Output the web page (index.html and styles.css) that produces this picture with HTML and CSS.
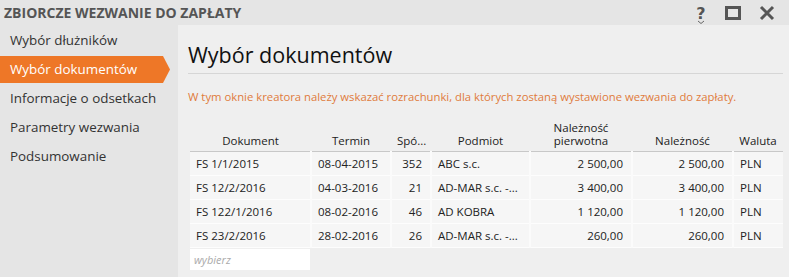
FILE: index.html
```html
<!DOCTYPE html>
<html lang="pl">
<head>
<meta charset="utf-8">
<link rel="stylesheet" href="styles.css">
</head>
<body>
<div class="window">
  <div class="titlebar">
    <div class="title">ZBIORCZE WEZWANIE DO ZAPŁATY</div>
    <div class="controls">
      <span class="ctl help">
        <svg width="14" height="20" viewBox="0 0 14 20"><text x="7" y="15" text-anchor="middle" class="qmark">?</text><path d="M4 17 L7 19.5 L10 17" fill="none" stroke="#666" stroke-width="1"/></svg>
      </span>
      <span class="ctl">
        <svg width="16" height="16" viewBox="0 0 16 16"><rect x="1.5" y="2.5" width="13" height="11" fill="none" stroke="#555" stroke-width="3"/></svg>
      </span>
      <span class="ctl">
        <svg width="16" height="16" viewBox="0 0 16 16"><path d="M2 2 L14 14 M14 2 L2 14" stroke="#555" stroke-width="3"/></svg>
      </span>
    </div>
  </div>
  <div class="body">
    <nav class="sidebar">
      <div class="step">Wybór dłużników</div>
      <div class="step active">Wybór dokumentów</div>
      <div class="step">Informacje o odsetkach</div>
      <div class="step">Parametry wezwania</div>
      <div class="step">Podsumowanie</div>
    </nav>
    <main class="main">
      <h1 class="heading">Wybór dokumentów</h1>
      <p class="hint">W tym oknie kreatora należy wskazać rozrachunki, dla których zostaną wystawione wezwania do zapłaty.</p>
      <table class="grid">
        <colgroup>
          <col class="c-doc"><col class="c-term"><col class="c-sp"><col class="c-pod"><col class="c-np"><col class="c-n"><col class="c-wal">
        </colgroup>
        <thead>
          <tr>
            <th>Dokument</th><th>Termin</th><th class="th-sp">Spó...</th><th>Podmiot</th><th class="th-np"><span class="l1">Należność</span><span class="l2">pierwotna</span></th><th>Należność</th><th>Waluta</th>
          </tr>
        </thead>
        <tbody>
          <tr><td>FS 1/1/2015</td><td>08-04-2015</td><td class="r">352</td><td>ABC s.c.</td><td class="r">2 500,00</td><td class="r">2 500,00</td><td>PLN</td></tr>
          <tr><td>FS 12/2/2016</td><td>04-03-2016</td><td class="r">21</td><td>AD-MAR s.c. -...</td><td class="r">3 400,00</td><td class="r">3 400,00</td><td>PLN</td></tr>
          <tr><td>FS 122/1/2016</td><td>08-02-2016</td><td class="r">46</td><td>AD KOBRA</td><td class="r">1 120,00</td><td class="r">1 120,00</td><td>PLN</td></tr>
          <tr><td>FS 23/2/2016</td><td>28-02-2016</td><td class="r">26</td><td>AD-MAR s.c. -...</td><td class="r">260,00</td><td class="r">260,00</td><td>PLN</td></tr>
        </tbody>
      </table>
      <div class="picker">wybierz</div>
    </main>
  </div>
</div>
</body>
</html>
```
FILE: styles.css
```css
* { box-sizing: border-box; }
html, body { margin: 0; padding: 0; }
body {
  width: 789px;
  height: 277px;
  overflow: hidden;
  background: #e5e5e5;
  font-family: "Open Sans", "Noto Sans", sans-serif;
  color: #222;
}
.window { display: flex; flex-direction: column; height: 277px; }
.titlebar {
  height: 25px;
  display: flex;
  align-items: center;
  justify-content: space-between;
  padding-left: 4px;
}
.title {
  font-size: 14px;
  font-weight: 700;
  color: #555;
}
.controls { display: flex; align-items: center; padding-right: 5px; }
.ctl { display: flex; width: 34px; justify-content: center; align-items: center; }
.ctl.help { width: 30px; padding-top: 3px; }
.qmark { font-family: "DejaVu Sans", sans-serif; font-weight: 700; font-size: 16px; fill: #555; }
.body { flex: 1; display: flex; }
.sidebar { width: 178px; padding-top: 1px; }
.step {
  height: 29px;
  line-height: 29px;
  padding-left: 10px;
  font-size: 13.4px;
  color: #333;
  white-space: nowrap;
}
.step.active {
  width: 170px;
  background: #ee7727;
  color: #fff;
  clip-path: polygon(0 1px, 163px 1px, 170px 50%, 163px calc(100% - 1px), 0 calc(100% - 1px));
}
.main {
  flex: 1;
  background: #efefef;
  padding: 0 6px 0 10px;
}
.heading {
  margin: 16px 0 0 0;
  font-size: 21.5px;
  line-height: 28px;
  font-weight: 400;
  color: #111;
  padding-bottom: 4px;
  border-bottom: 1px solid #d6d6d6;
}
.hint {
  margin: 15px 0 0 0;
  font-size: 11.3px;
  line-height: 15px;
  color: #e07b3c;
  white-space: nowrap;
}
.grid {
  margin: 11px 0 0 2px;
  width: 593px;
  border-collapse: collapse;
  table-layout: fixed;
  font-size: 11.5px;
}
.c-doc { width: 121px; }
.c-term { width: 80px; }
.c-sp { width: 40px; }
.c-pod { width: 99px; }
.c-np { width: 102px; }
.c-n { width: 101px; }
.c-wal { width: 50px; }
.grid th {
  font-weight: 400;
  text-align: center;
  vertical-align: bottom;
  padding: 0 0 3px 0;
  line-height: 14px;
  height: 36px;
  border-bottom: 1px solid #c8c8c8;
  color: #222;
  white-space: nowrap;
}
.grid th.th-sp { text-align: left; padding-left: 6px; }
.th-np .l1, .th-np .l2 { display: block; line-height: 13px; }
.th-np .l2 { line-height: 14px; }
.grid td {
  height: 24px;
  padding: 0 6px;
  background: #f6f6f6;
  border-right: 2px solid #fbfbfb;
  border-bottom: 1px solid #fdfdfd;
  white-space: nowrap;
  overflow: hidden;
  color: #222;
}
.grid td:last-child { border-right: none; }
.grid td.r { text-align: right; padding-right: 8px; }
.picker {
  margin: 1px 0 0 2px;
  width: 120px;
  height: 21px;
  line-height: 21px;
  background: #fff;
  font-size: 11px;
  font-style: italic;
  color: #aaa;
  padding-left: 4px;
}
```
